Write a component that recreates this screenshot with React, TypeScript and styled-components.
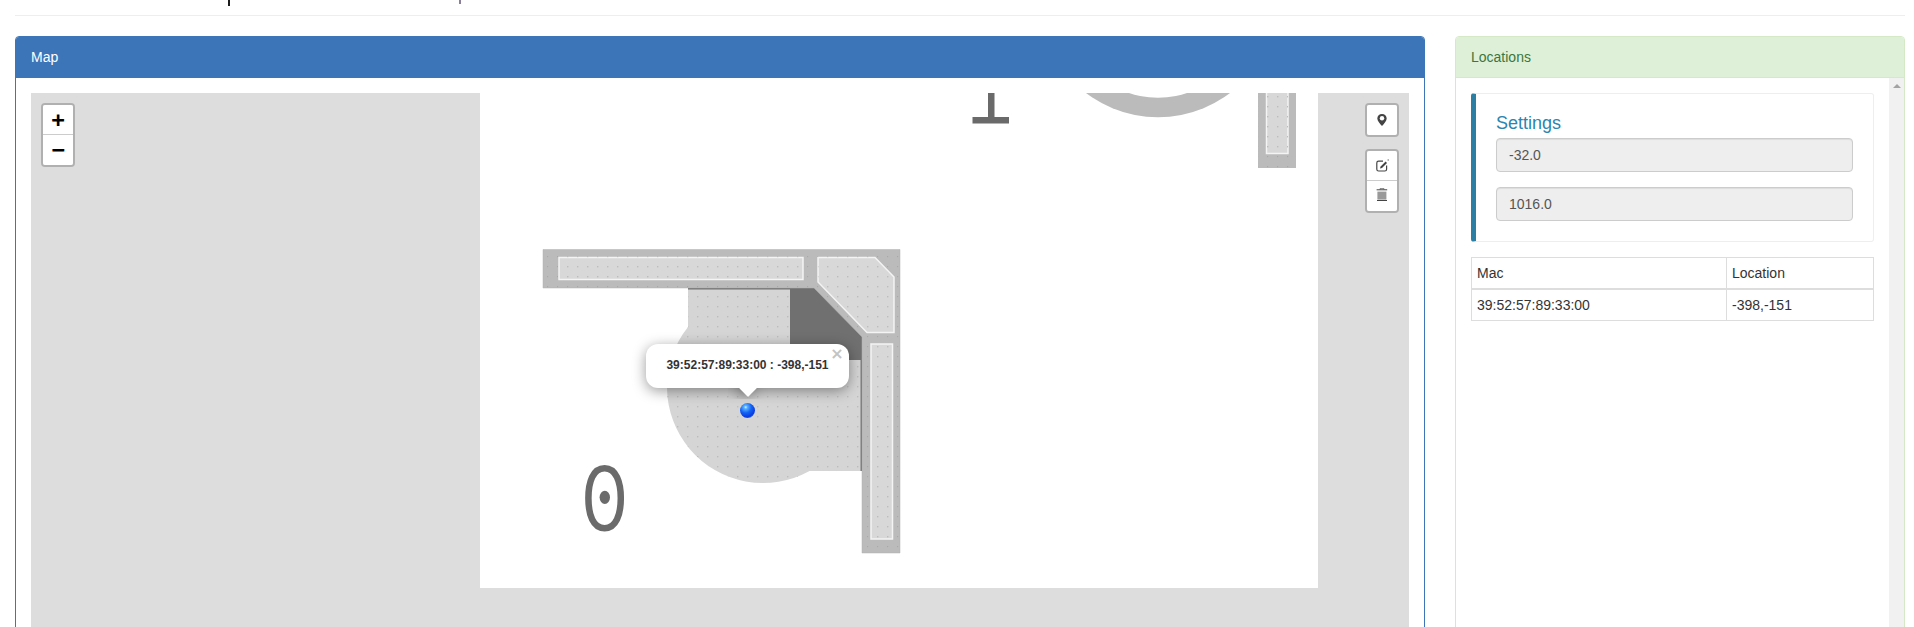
import React from "react";
import styled, { createGlobalStyle } from "styled-components";

const GlobalStyle = createGlobalStyle`
  html, body {
    margin: 0;
    padding: 0;
    background: #fff;
    overflow: hidden;
  }
  body {
    font: 14px/20px "Liberation Sans", Arial, sans-serif;
    color: #333;
  }
  * {
    box-sizing: border-box;
  }
`;

const Page = styled.div`
  height: 627px;
  overflow: hidden;
  padding: 0 9px 0 15px;
`;

const PageHeader = styled.div`
  display: flex;
  align-items: flex-start;
  height: 16px;
  margin-bottom: 20px;
  border-bottom: 1px solid #eee;
`;

const Descender = styled.span<{ $left: number; $height: number; $color: string }>`
  width: 2px;
  height: ${(p) => p.$height}px;
  margin-left: ${(p) => p.$left}px;
  background: ${(p) => p.$color};
`;

const Columns = styled.div`
  display: grid;
  grid-template-columns: 1410px 450px;
  gap: 30px;
`;

const Panel = styled.section<{ $border: string }>`
  height: 660px;
  display: flex;
  flex-direction: column;
  border: 1px solid ${(p) => p.$border};
  border-radius: 4px;
  background: #fff;
`;

const PanelHeading = styled.div<{ $bg: string; $color: string; $border: string }>`
  flex: none;
  height: 41px;
  padding: 10px 15px;
  background: ${(p) => p.$bg};
  color: ${(p) => p.$color};
  border-bottom: 1px solid ${(p) => p.$border};
  border-radius: 3px 3px 0 0;
`;

const MapBody = styled.div`
  flex: 1;
  padding: 15px;
`;

const MapCanvas = styled.div`
  position: relative;
  height: 600px;
  background: #ddd;
  overflow: hidden;
`;

const FloorPlan = styled.svg`
  display: block;
`;

const ZoomControls = styled.div`
  position: absolute;
  top: 10px;
  left: 10px;
`;

const ToolControls = styled.div`
  position: absolute;
  top: 10px;
  right: 10px;
  display: flex;
  flex-direction: column;
  gap: 12px;
`;

const ControlBar = styled.div`
  border: 2px solid rgba(0, 0, 0, 0.2);
  border-radius: 4px;
  background-clip: padding-box;
  overflow: hidden;
`;

const ControlButton = styled.a`
  display: flex;
  align-items: center;
  justify-content: center;
  width: 30px;
  height: 30px;
  background: #fff;
  color: #000;
  border-bottom: 1px solid #ccc;
  font: bold 22px/30px "DejaVu Sans Mono", "Liberation Mono", monospace;

  &:last-child {
    border-bottom: none;
  }
`;

const PopupBox = styled.div`
  position: absolute;
  left: 615px;
  top: 251px;
  width: 203px;
  height: 44px;
  padding: 13px 0;
  border-radius: 12px;
  background: #fff;
  box-shadow: 0 3px 14px rgba(0, 0, 0, 0.4);
  text-align: center;
  color: #333;
  font: bold 12px/17px "Liberation Sans", Arial, sans-serif;
`;

const PopupClose = styled.span`
  position: absolute;
  top: 3px;
  right: 3px;
  width: 18px;
  height: 14px;
  color: #c3c3c3;
  font: bold 16px/14px "DejaVu Sans", sans-serif;
  text-align: center;
`;

const PopupTip = styled.div`
  position: absolute;
  left: 50%;
  top: 44px;
  width: 40px;
  height: 11px;
  margin-left: -20px;
  overflow: hidden;

  &::after {
    content: "";
    position: absolute;
    left: 13px;
    top: -8px;
    width: 14px;
    height: 14px;
    background: #fff;
    transform: rotate(45deg);
    box-shadow: 0 3px 14px rgba(0, 0, 0, 0.4);
  }
`;

const Marker = styled.div`
  position: absolute;
  left: 709px;
  top: 310px;
  width: 15px;
  height: 15px;
  border-radius: 50%;
  background: radial-gradient(circle at 38% 28%, #d8f0ff 0, #58b0ff 12%, #1262f5 40%, #0b3be0 68%, #1c7cff 88%, #46b4ff 100%);
`;

const LocationsBody = styled.div`
  flex: 1;
  display: flex;
`;

const LocationsContent = styled.div`
  flex: 1;
  padding: 15px;
`;

const ScrollTrack = styled.div`
  flex: none;
  width: 15px;
  background: #f1f1f1;
  padding-top: 6px;
  display: flex;
  justify-content: center;
  align-items: flex-start;

  &::before {
    content: "";
    border-left: 4px solid transparent;
    border-right: 4px solid transparent;
    border-bottom: 4px solid #a3a3a3;
  }
`;

const Callout = styled.div`
  padding: 19px 20px 20px;
  margin-bottom: 15px;
  border: 1px solid #eee;
  border-left: 5px solid #2c7fa3;
  border-radius: 3px;
`;

const CalloutTitle = styled.h4`
  margin: 0 0 5px;
  color: #2c85b0;
  font-size: 18px;
  font-weight: 500;
  line-height: 20px;
`;

const ReadonlyField = styled.input`
  display: block;
  width: 100%;
  height: 34px;
  padding: 6px 12px;
  margin-bottom: 15px;
  background: #eee;
  color: #555;
  border: 1px solid #ccc;
  border-radius: 4px;
  box-shadow: inset 0 1px 1px rgba(0, 0, 0, 0.075);
  font: 14px/20px "Liberation Sans", Arial, sans-serif;

  &:last-child {
    margin-bottom: 0;
  }
`;

const Table = styled.table`
  width: 100%;
  border-collapse: collapse;
  table-layout: fixed;
`;

const HeadCell = styled.th`
  padding: 5px;
  height: 31px;
  font-weight: 400;
  text-align: left;
  border: 1px solid #ddd;
  border-bottom-width: 2px;
`;

const Cell = styled.td`
  padding: 5px;
  height: 31px;
  border: 1px solid #ddd;
`;

const ControlIcon = styled.svg`
  display: block;
`;

const PlanDefs = () => (
  <defs>
    <pattern id="dots" x="3" y="2" width="10" height="10" patternUnits="userSpaceOnUse">
      <rect x="4" y="4" width="1.4" height="1.4" fill="#bcbcbc" />
    </pattern>
    <pattern id="wallDots" x="3" y="2" width="10" height="10" patternUnits="userSpaceOnUse">
      <rect x="4" y="4" width="1.2" height="1.2" fill="#a8a8a8" />
    </pattern>
  </defs>
);

const WALL = "M543 249.5H900V553H862V337L814 288H543Z";
const CORNER = "M818 257.5H875L894 277V332.5H867L818 282Z";
const FLOOR = "M688 289H790V360H861V471H809.5A96 96 0 0 1 688 327.1Z";
const DOOR_RING =
  "M604.6 468.3C616 468.3 620.8 482 620.8 498.3 620.8 514.6 616 528.3 604.6 528.3 593 528.3 588.4 514.6 588.4 498.3 588.4 482 593 468.3 604.6 468.3Z";

const FloorPlanDrawing = () => (
  <FloorPlan width="1378" height="600" viewBox="31 93 1378 600">
    <PlanDefs />
    <rect x="480" y="93" width="838" height="495" fill="#fff" />

    {/* top fragments */}
    <path d="M988 93h6.5v24H1009v6.5H972.5V117H988Z" fill="#6a6a6a" />
    <circle cx="1158" cy="-1.5" r="118.8" fill="#bbb" />
    <circle cx="1158" cy="5.9" r="91.8" fill="#fff" />
    <rect x="1258" y="93" width="38" height="75" fill="#bbb" />
    <rect x="1258" y="93" width="38" height="75" fill="url(#wallDots)" />
    <rect x="1266.5" y="90" width="21.5" height="63.5" fill="#d8d8d8" stroke="#f4f4f4" strokeWidth="1.5" />
    <rect x="1266.5" y="93" width="21.5" height="60" fill="url(#dots)" />

    {/* floor */}
    <rect x="790" y="288" width="72" height="73" fill="#707070" />
    <path d={FLOOR} fill="#d5d5d5" />
    <path d={FLOOR} fill="url(#dots)" />
    <path d="M688 288.8H814M861.3 360V471" stroke="#707070" strokeWidth="1.5" fill="none" />

    {/* walls */}
    <path d={WALL} fill="#bbb" stroke="#b0b0b0" strokeWidth="0.5" />
    <path d={WALL} fill="url(#wallDots)" />
    <rect x="559" y="257.5" width="244" height="22" fill="#d8d8d8" stroke="#f4f4f4" strokeWidth="1.5" />
    <rect x="559" y="257.5" width="244" height="22" fill="url(#dots)" />
    <path d={CORNER} fill="#d8d8d8" stroke="#f4f4f4" strokeWidth="1.5" />
    <path d={CORNER} fill="url(#dots)" />
    <rect x="871" y="344" width="21.5" height="195" fill="#d8d8d8" stroke="#f4f4f4" strokeWidth="1.5" />
    <rect x="871" y="344" width="21.5" height="195" fill="url(#dots)" />

    {/* door symbol */}
    <path d={DOOR_RING} fill="none" stroke="#6b6b6b" strokeWidth="6.5" />
    <ellipse cx="604.8" cy="497.3" rx="5.2" ry="6.6" fill="#6b6b6b" />
  </FloorPlan>
);

const PinIcon = () => (
  <ControlIcon width="14" height="14" viewBox="0 0 14 14">
    <path
      d="M7 1C4.3 1 2.3 3 2.3 5.4 2.3 8.2 5.4 10.8 7 13 8.6 10.8 11.7 8.2 11.7 5.4 11.7 3 9.7 1 7 1Z"
      fill="#444"
    />
    <circle cx="7" cy="5.2" r="2.2" fill="#fff" />
  </ControlIcon>
);

const EditIcon = () => (
  <ControlIcon width="16" height="16" viewBox="0 0 16 16">
    <path
      d="M9 3.2H4.6A1.8 1.8 0 0 0 2.8 5V11.2A1.8 1.8 0 0 0 4.6 13H10.8A1.8 1.8 0 0 0 12.6 11.2V7.6"
      fill="none"
      stroke="#444"
      strokeWidth="1.2"
    />
    <path d="M6 10.6 6.6 8.6 11.6 3.6 13 5 8 10Z" fill="#444" />
    <rect x="13.6" y="1.4" width="1.2" height="1.2" fill="#666" />
  </ControlIcon>
);

const TrashIcon = () => (
  <ControlIcon width="16" height="16" viewBox="0 0 16 16">
    <path d="M6 1.6V0.6H10V1.6" fill="none" stroke="#666" strokeWidth="0.8" />
    <path d="M2.6 1.8H13.2" stroke="#444" strokeWidth="1" />
    <rect x="3.4" y="3.6" width="9" height="8" fill="#999" />
    <path d="M3 12.5H13" stroke="#444" strokeWidth="1" />
  </ControlIcon>
);

const App = () => (
  <Page>
    <GlobalStyle />
    <PageHeader>
      <Descender $left={213} $height={6} $color="#1c1c1c" />
      <Descender $left={229} $height={4} $color="#8a7f9a" />
    </PageHeader>
    <Columns>
      <Panel $border="#3c76b8">
        <PanelHeading $bg="#3c76b8" $color="#fff" $border="#3c76b8">
          Map
        </PanelHeading>
        <MapBody>
          <MapCanvas>
            <FloorPlanDrawing />
            <ZoomControls>
              <ControlBar>
                <ControlButton>+</ControlButton>
                <ControlButton>−</ControlButton>
              </ControlBar>
            </ZoomControls>
            <ToolControls>
              <ControlBar>
                <ControlButton>
                  <PinIcon />
                </ControlButton>
              </ControlBar>
              <ControlBar>
                <ControlButton>
                  <EditIcon />
                </ControlButton>
                <ControlButton>
                  <TrashIcon />
                </ControlButton>
              </ControlBar>
            </ToolControls>
            <Marker />
            <PopupBox>
              39:52:57:89:33:00 : -398,-151
              <PopupClose>×</PopupClose>
              <PopupTip />
            </PopupBox>
          </MapCanvas>
        </MapBody>
      </Panel>
      <Panel $border="#d6e9c6">
        <PanelHeading $bg="#dff0d8" $color="#3c763d" $border="#d6e9c6">
          Locations
        </PanelHeading>
        <LocationsBody>
          <LocationsContent>
            <Callout>
              <CalloutTitle>Settings</CalloutTitle>
              <ReadonlyField readOnly value="-32.0" />
              <ReadonlyField readOnly value="1016.0" />
            </Callout>
            <Table>
              <colgroup>
                <col style={{ width: 255 }} />
                <col />
              </colgroup>
              <thead>
                <tr>
                  <HeadCell>Mac</HeadCell>
                  <HeadCell>Location</HeadCell>
                </tr>
              </thead>
              <tbody>
                <tr>
                  <Cell>39:52:57:89:33:00</Cell>
                  <Cell>-398,-151</Cell>
                </tr>
              </tbody>
            </Table>
          </LocationsContent>
          <ScrollTrack />
        </LocationsBody>
      </Panel>
    </Columns>
  </Page>
);

export default App;
